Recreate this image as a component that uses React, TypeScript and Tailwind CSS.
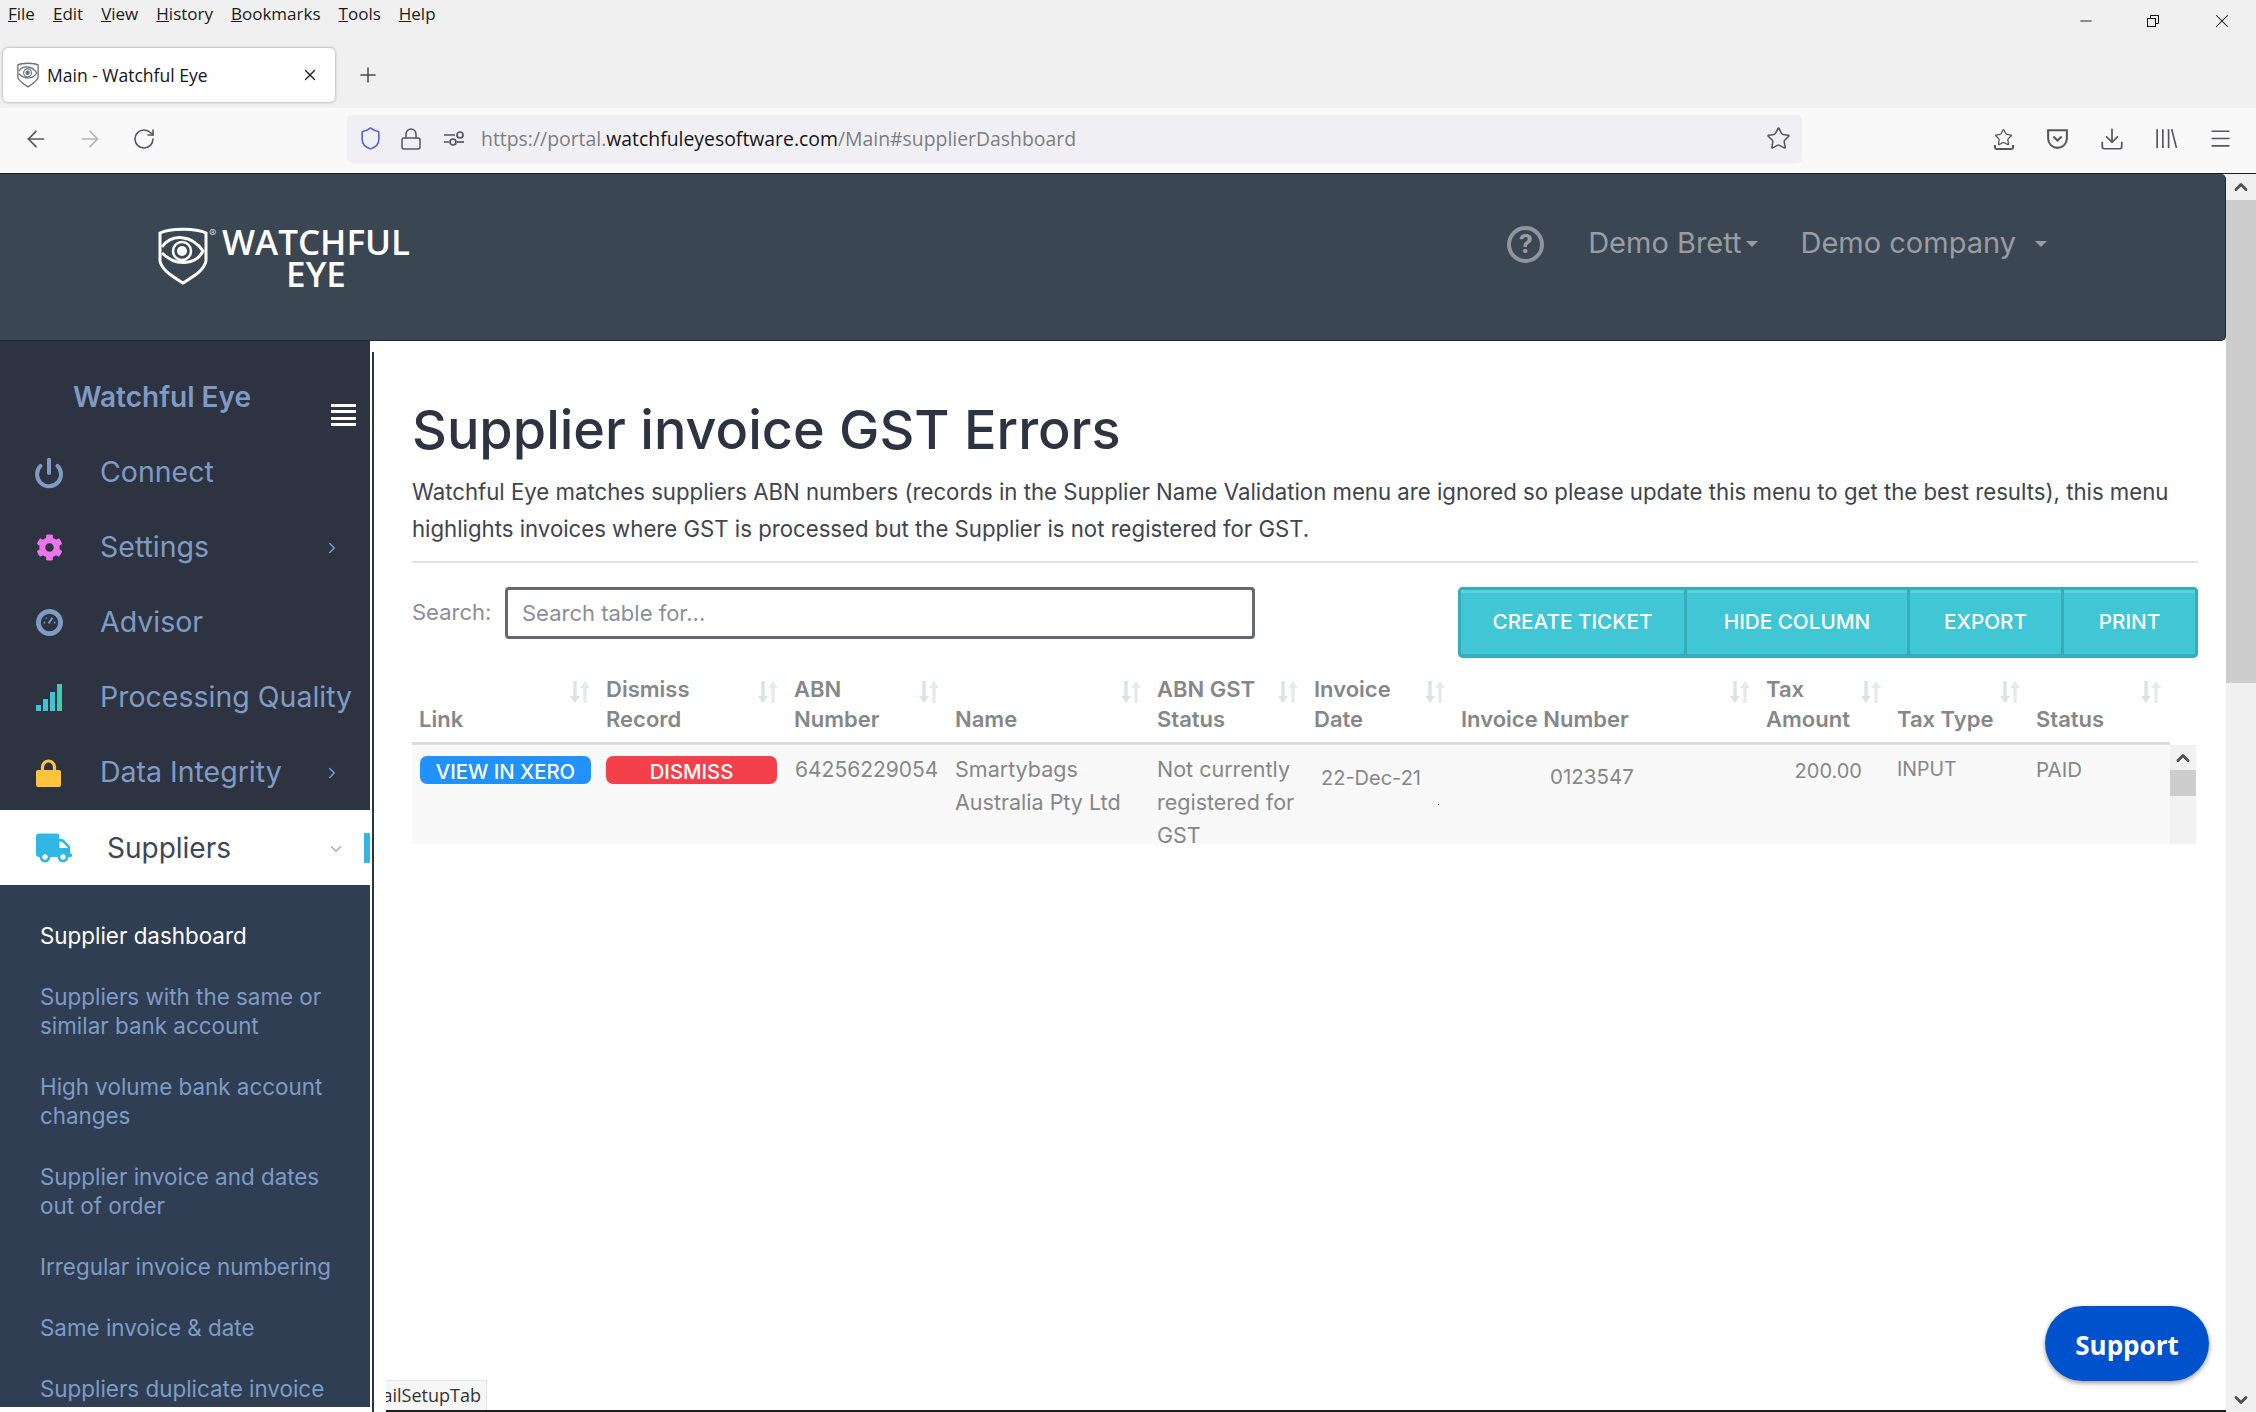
import React from 'react';
import {
  ArrowLeft,
  ArrowRight,
  ChevronDown,
  ChevronRight,
  ChevronUp,
  Download,
  Lock,
  Menu,
  Minus,
  Plus,
  Power,
  RotateCw,
  Shield,
  Star,
  X,
} from 'lucide-react';
import { FaCog, FaTruck } from 'react-icons/fa';

const menus = ['File', 'Edit', 'View', 'History', 'Bookmarks', 'Tools', 'Help'];

const submenu = [
  'Suppliers with the same or similar bank account',
  'High volume bank account changes',
  'Supplier invoice and dates out of order',
  'Irregular invoice numbering',
  'Same invoice & date',
  'Suppliers duplicate invoice',
];

const headers = [
  { top: '', bottom: 'Link' },
  { top: 'Dismiss', bottom: 'Record' },
  { top: 'ABN', bottom: 'Number' },
  { top: '', bottom: 'Name' },
  { top: 'ABN GST', bottom: 'Status' },
  { top: 'Invoice', bottom: 'Date' },
  { top: '', bottom: 'Invoice Number' },
  { top: 'Tax', bottom: 'Amount' },
  { top: '', bottom: 'Tax Type' },
  { top: '', bottom: 'Status' },
];

const COLS = 'grid grid-cols-[187px_188px_161px_202px_157px_147px_305px_131px_139px_141px]';

function ShieldEye({ className }: { className?: string }) {
  return (
    <svg viewBox="0 0 50 58" fill="none" stroke="currentColor" className={className}>
      <path d="M2 6 C12 1 38 1 48 6 L48 34 C46 44 34 50 25 56 C16 50 4 44 2 34 Z" strokeWidth="3" />
      <path d="M4 20 C14 6 34 8 45 24 C38 38 18 40 4 26" strokeWidth="3" />
      <circle cx="24" cy="24" r="9" strokeWidth="2.5" />
      <circle cx="24" cy="24" r="5" fill="currentColor" stroke="none" />
    </svg>
  );
}

function SortIcon() {
  return (
    <svg viewBox="0 0 22 24" className="w-[22px] h-[24px] shrink-0">
      <path d="M6 1v18" stroke="#dfe2e2" strokeWidth="3.4" />
      <path d="M1 16h10l-5 7z" fill="#dfe2e2" />
      <path d="M16 23V5" stroke="#e8eaea" strokeWidth="3.4" />
      <path d="M11 8h10l-5-7z" fill="#e8eaea" />
    </svg>
  );
}

function SideItem({
  icon,
  label,
  arrow,
}: {
  icon: React.ReactNode;
  label: string;
  arrow?: boolean;
}) {
  return (
    <div className="h-[75px] shrink-0 flex items-center pl-[36px] pr-[29px] text-[#7f9bc4]">
      <div className="w-[64px] shrink-0">{icon}</div>
      <span className="text-[28.5px] whitespace-nowrap flex-1">{label}</span>
      {arrow && <ChevronRight size={18} className="shrink-0" />}
    </div>
  );
}

export default function App() {
  return (
    <div className="w-[2256px] h-[1412px] relative overflow-hidden bg-white flex flex-col font-['Inter',sans-serif]">
      {/* browser chrome */}
      <div className="h-[108px] bg-[#f0f0f0] relative font-['Open_Sans',sans-serif]">
        <div className="h-[28px] flex items-center pl-[8px] gap-[18px] text-[17px] text-[#1b1b1b]">
          {menus.map((m) => (
            <span key={m}>
              <span className="underline">{m[0]}</span>
              {m.slice(1)}
            </span>
          ))}
        </div>
        <div className="flex items-center mt-[20px] pl-[3px]">
          <div className="w-[332px] h-[54px] bg-white rounded-[5px] shadow-[0_0_3px_rgba(0,0,0,0.4)] flex items-center pl-[14px] pr-[16px] text-[17.5px] text-[#15141a]">
            <ShieldEye className="w-[22px] h-[26px] text-[#6b7280] mr-[8px]" />
            <span className="flex-1">Main - Watchful Eye</span>
            <X size={18} strokeWidth={1.6} />
          </div>
          <Plus size={24} strokeWidth={1.5} className="ml-[21px] text-[#4a4a4f]" />
        </div>
        <div className="absolute right-[23px] top-[10px] flex items-center gap-[50px] text-[#111]">
          <Minus size={18} strokeWidth={1.2} />
          <svg viewBox="0 0 16 16" className="w-[16px] h-[16px]" fill="none" stroke="currentColor">
            <rect x="2.5" y="5.5" width="8" height="8" />
            <path d="M5.5 5V2.5h8v8H11" />
          </svg>
          <X size={22} strokeWidth={1.1} />
        </div>
      </div>
      <div className="h-[65px] bg-[#f9f9f9] flex items-center pl-[23px] pr-[23px] pb-[4px] text-[#56565c] font-['Open_Sans',sans-serif]">
        <ArrowLeft size={26} strokeWidth={1.6} />
        <ArrowRight size={26} strokeWidth={1.6} className="ml-[28px] text-[#b5b5b8]" />
        <RotateCw size={24} strokeWidth={1.6} className="ml-[29px]" />
        <div className="w-[1455px] h-[48px] ml-[191px] bg-[#f0f0f4] rounded-[5px] flex items-center pl-[11px] pr-[11px]">
          <Shield size={25} strokeWidth={1.5} className="text-[#4f5fe0]" />
          <Lock size={24} strokeWidth={1.5} className="ml-[16px]" />
          <svg viewBox="0 0 22 18" className="w-[22px] h-[18px] ml-[20px]" fill="none" stroke="currentColor" strokeWidth="1.7">
            <path d="M1 5h11M1 12h5" />
            <circle cx="17" cy="5" r="3" />
            <circle cx="10" cy="12" r="3" />
            <path d="M14 12h7" />
          </svg>
          <span className="ml-[16px] text-[19.4px] text-[#7d7d85] flex-1">
            https://portal.<span className="text-[#15141a]">watchfuleyesoftware.com</span>/Main#supplierDashboard
          </span>
          <Star size={25} strokeWidth={1.5} />
        </div>
        <div className="flex items-center ml-[auto] gap-[29px]">
          <div className="flex flex-col items-center w-[25px]">
            <Star size={19} strokeWidth={1.6} />
            <div className="w-[20px] h-[5px] border-b-2 border-x-2 border-[#56565c] rounded-b-[3px] -mt-[2px]" />
          </div>
          <svg viewBox="0 0 24 24" className="w-[25px] h-[25px]" fill="none" stroke="currentColor" strokeWidth="2">
            <path d="M3 4h18v8a9 9 0 0 1-18 0z" />
            <path d="M8 10l4 4 4-4" />
          </svg>
          <Download size={26} strokeWidth={1.6} />
          <svg viewBox="0 0 24 24" className="w-[25px] h-[25px]" fill="none" stroke="currentColor" strokeWidth="1.6">
            <path d="M3 3v18M8.5 3v18M14 3v18M17 3l4.5 18" />
          </svg>
          <Menu size={25} strokeWidth={1.6} />
        </div>
      </div>

      {/* page + its scrollbar */}
      <div className="flex-1 flex min-h-0 border-t border-[#1c1c1c]">
        <div className="w-[2226px] flex flex-col min-h-0">
          <header className="h-[167px] shrink-0 bg-[#3a4651] rounded-tr-[5px] rounded-br-[5px] border-r border-b border-[#22282e] flex items-start">
            <div className="flex items-start ml-[158px] mt-[53px] text-white">
              <ShieldEye className="w-[50px] h-[58px]" />
              <div className="w-[13px] text-[11px] leading-[12px] text-[#c8ccd0] pl-[1px]">®</div>
              <div className="w-[190px] -mt-[1px] font-['Open_Sans',sans-serif] font-semibold text-[35px] text-center">
                <div className="leading-[32px]">WATCHFUL</div>
                <div className="leading-[32px]">EYE</div>
              </div>
            </div>
            <div className="ml-auto mr-[178px] mt-[47px] flex items-center text-[#999da2] text-[29px]">
              <div className="w-[37px] h-[37px] rounded-full border-[4px] border-[#8f959b] flex items-center justify-center font-bold text-[25px] mr-[44px] mt-[3px]">
                ?
              </div>
              <span>Demo Brett</span>
              <span className="ml-[4px] mt-[3px] border-x-[6px] border-x-transparent border-t-[6px] border-t-[#999da2]" />
              <span className="ml-[43px]">Demo company</span>
              <span className="ml-[19px] mt-[3px] border-x-[6px] border-x-transparent border-t-[6px] border-t-[#999da2]" />
            </div>
          </header>

          <div className="flex-1 flex min-h-0">
            {/* sidebar */}
            <aside className="w-[370px] shrink-0 bg-[#2d3340] flex flex-col overflow-hidden mb-[5px]">
              <div className="h-[94px] shrink-0 flex items-start justify-between pl-[73px] pr-[14px] pt-[39px]">
                <span className="text-[28px] leading-[34px] font-semibold text-[#7f9bc4]">Watchful Eye</span>
                <div className="mt-[24px] w-[25px] h-[22px] flex flex-col justify-between">
                  <div className="h-[3px] bg-white" />
                  <div className="h-[3px] bg-white" />
                  <div className="h-[3px] bg-white" />
                  <div className="h-[3px] bg-white" />
                </div>
              </div>
              <SideItem icon={<Power size={32} strokeWidth={3} className="-ml-[3px]" />} label="Connect" />
              <SideItem icon={<FaCog size={27} className="text-[#ea76ea]" />} label="Settings" arrow />
              <SideItem
                icon={
                  <svg viewBox="0 0 28 28" className="w-[27px] h-[27px]" fill="none" stroke="currentColor">
                    <circle cx="14" cy="14" r="11.5" strokeWidth="5" />
                    <path d="M13 15l4-6" strokeWidth="2" />
                    <path d="M8 14h1.5M18.5 14h1.5M10 9.5h1" strokeWidth="2" />
                  </svg>
                }
                label="Advisor"
              />
              <SideItem
                icon={
                  <div className="flex items-end gap-[2px] h-[27px]">
                    <div className="w-[5px] h-[6px] bg-[#3fc4d2]" />
                    <div className="w-[5px] h-[12px] bg-[#3fc4d2]" />
                    <div className="w-[5px] h-[19px] bg-[#3fc4d2]" />
                    <div className="w-[5px] h-[27px] bg-[#3dcbb4]" />
                  </div>
                }
                label="Processing Quality"
              />
              <SideItem
                icon={
                  <svg viewBox="0 0 25 28" className="w-[25px] h-[28px] text-[#ffc33d]">
                    <path d="M6.5 11V8a6 6 0 0 1 12 0v3" fill="none" stroke="currentColor" strokeWidth="3.2" />
                    <rect x="0" y="11" width="25" height="17" rx="2" fill="currentColor" />
                  </svg>
                }
                label="Data Integrity"
                arrow
              />
              <div className="h-[75px] shrink-0 bg-white flex items-center pl-[36px] relative">
                <FaTruck size={36} className="text-[#30b7e6]" />
                <span className="ml-[35px] text-[28px] text-[#3c4656]">Suppliers</span>
                <ChevronDown size={18} className="absolute left-[327px] top-[30px] text-[#9fb0c6]" />
                <div className="absolute right-0 top-[23px] w-[6px] h-[30px] bg-[#30b7e6]" />
              </div>
              <div className="flex-1 bg-[#2f3e53] pl-[40px] pr-[30px] pt-[36px] text-[22.4px] leading-[29px] text-[#7f9bc4]">
                <div className="text-white mb-[32px]">Supplier dashboard</div>
                {submenu.map((s) => (
                  <div key={s} className="mb-[32px]">
                    {s}
                  </div>
                ))}
              </div>
            </aside>

            {/* main content */}
            <div className="flex-1 min-w-0 ml-[2px] pt-[11px]">
              <main className="h-full border-l-2 border-[#2d3340] pl-[38px] pr-[28px] pt-[46px]">
                <h1 className="text-[54px] leading-[64px] font-medium text-[#2d3340]">Supplier invoice GST Errors</h1>
                <p className="mt-[11px] text-[22.2px] leading-[37px] text-[#3e4450]">
                  Watchful Eye matches suppliers ABN numbers (records in the Supplier Name Validation menu are ignored so please update this menu to get the best results), this menu highlights invoices where GST is processed but the Supplier is not registered for GST.
                </p>
                <div className="mt-[14px] h-[2px] bg-[#e0e4e8]" />
                <div className="mt-[24px] flex items-start">
                  <span className="w-[93px] mt-[9px] text-[22px] text-[#8a8f96]">Search:</span>
                  <input
                    readOnly
                    placeholder="Search table for..."
                    className="w-[750px] h-[52px] border-[3px] border-[#666a70] rounded-[4px] px-[14px] text-[22px] placeholder:text-[#8a8f96] outline-none"
                  />
                  <div className="ml-auto flex h-[71px] rounded-[5px] overflow-hidden text-white text-[20.7px] font-medium">
                    <div className="w-[229px] bg-[#41c6d6] border-[3px] border-[#35adba] border-b-[4px] shadow-[inset_0_3px_0_#5bd0de] flex items-center justify-center">CREATE TICKET</div>
                    <div className="w-[223px] bg-[#41c6d6] border-y-[3px] border-r-[3px] border-[#35adba] border-b-[4px] shadow-[inset_0_3px_0_#5bd0de] flex items-center justify-center">HIDE COLUMN</div>
                    <div className="w-[154px] bg-[#41c6d6] border-y-[3px] border-r-[3px] border-[#35adba] border-b-[4px] shadow-[inset_0_3px_0_#5bd0de] flex items-center justify-center">EXPORT</div>
                    <div className="w-[134px] bg-[#41c6d6] border-y-[3px] border-r-[3px] border-[#35adba] border-b-[4px] shadow-[inset_0_3px_0_#5bd0de] flex items-center justify-center">PRINT</div>
                  </div>
                </div>

                {/* table */}
                <div className={`${COLS} w-[1758px] mt-[16px] h-[71px] border-b-[3px] border-[#dcdcdc] text-[22px] leading-[30px] font-semibold text-[#85878a]`}>
                  {headers.map((h) => (
                    <div key={h.bottom} className="pl-[7px] pr-[8px] flex items-start justify-between">
                      <div>
                        <div className="h-[30px] whitespace-nowrap">{h.top}</div>
                        <div className="whitespace-nowrap">{h.bottom}</div>
                      </div>
                      <div className="mt-[6px]">
                        <SortIcon />
                      </div>
                    </div>
                  ))}
                </div>
                <div className="flex h-[99px] w-[1784px] bg-[#f9f9f9] overflow-hidden">
                  <div className={`${COLS} w-[1758px] text-[21.5px] leading-[33px] text-[#85878a]`}>
                    <div className="pl-[8px] pt-[11px]">
                      <div className="w-[171px] h-[28px] rounded-[7px] bg-[#2191fb] text-white text-[20.3px] font-medium leading-[31px] text-center">VIEW IN XERO</div>
                    </div>
                    <div className="pl-[7px] pt-[11px]">
                      <div className="w-[171px] h-[28px] rounded-[7px] bg-[#f4404a] text-white text-[20.3px] font-medium leading-[31px] text-center">DISMISS</div>
                    </div>
                    <div className="pl-[8px] pt-[8px] text-[21px]">64256229054</div>
                    <div className="pl-[7px] pt-[8px]">Smartybags Australia Pty Ltd</div>
                    <div className="pl-[7px] pt-[8px] pr-[4px]">Not currently registered for GST</div>
                    <div className="pl-[14px] pt-[17px] relative text-[20px]">
                      22-Dec-21
                      <div className="absolute left-[131px] top-[59px] w-[1px] h-[1px] bg-black" />
                    </div>
                    <div className="pl-[96px] pt-[15px] text-[20.5px]">0123547</div>
                    <div className="pl-[30px] pt-[10px] text-right pr-[28px] text-[20px]">200.00</div>
                    <div className="pl-[7px] pt-[8px] text-[19.5px]">INPUT</div>
                    <div className="pl-[7px] pt-[8px] text-[20.5px]">PAID</div>
                  </div>
                  <div className="w-[26px] bg-[#f1f1f1] flex flex-col">
                    <div className="h-[25px] flex items-center justify-center">
                      <ChevronUp size={20} strokeWidth={3.4} className="text-[#505050]" />
                    </div>
                    <div className="h-[26px] bg-[#cdcdcd]" />
                  </div>
                </div>
              </main>
            </div>
          </div>
        </div>

        {/* window scrollbar */}
        <div className="flex-1 bg-[#f0f0f0] flex flex-col">
          <div className="h-[26px] flex items-center justify-center">
            <ChevronUp size={20} strokeWidth={3.4} className="text-[#505050]" />
          </div>
          <div className="h-[483px] bg-[#cdcdcd]" />
          <div className="flex-1 flex items-end justify-center pb-[2px]">
            <ChevronDown size={20} strokeWidth={3.4} className="text-[#505050]" />
          </div>
        </div>
      </div>

      {/* floats over the page */}
      <div className="absolute left-[386px] top-[1380px] w-[101px] h-[30px] bg-[#f6f6f6] border-t border-r border-[#e4e4e4] overflow-hidden flex justify-end pr-[5px] font-['Open_Sans',sans-serif] text-[18px] leading-[28px] text-[#333]">
        <span className="whitespace-nowrap">nailSetupTab</span>
      </div>
      <div className="absolute left-[386px] right-[30px] bottom-0 h-[2px] bg-[#1c1c1c]" />
      <div className="absolute left-[2045px] top-[1306px] w-[164px] h-[75px] rounded-full bg-[#0052cc] shadow-[0_2px_5px_rgba(0,0,0,0.4)] flex items-center justify-center pt-[3px] font-['Open_Sans',sans-serif] font-bold text-[26px] text-white">
        Support
      </div>
    </div>
  );
}
